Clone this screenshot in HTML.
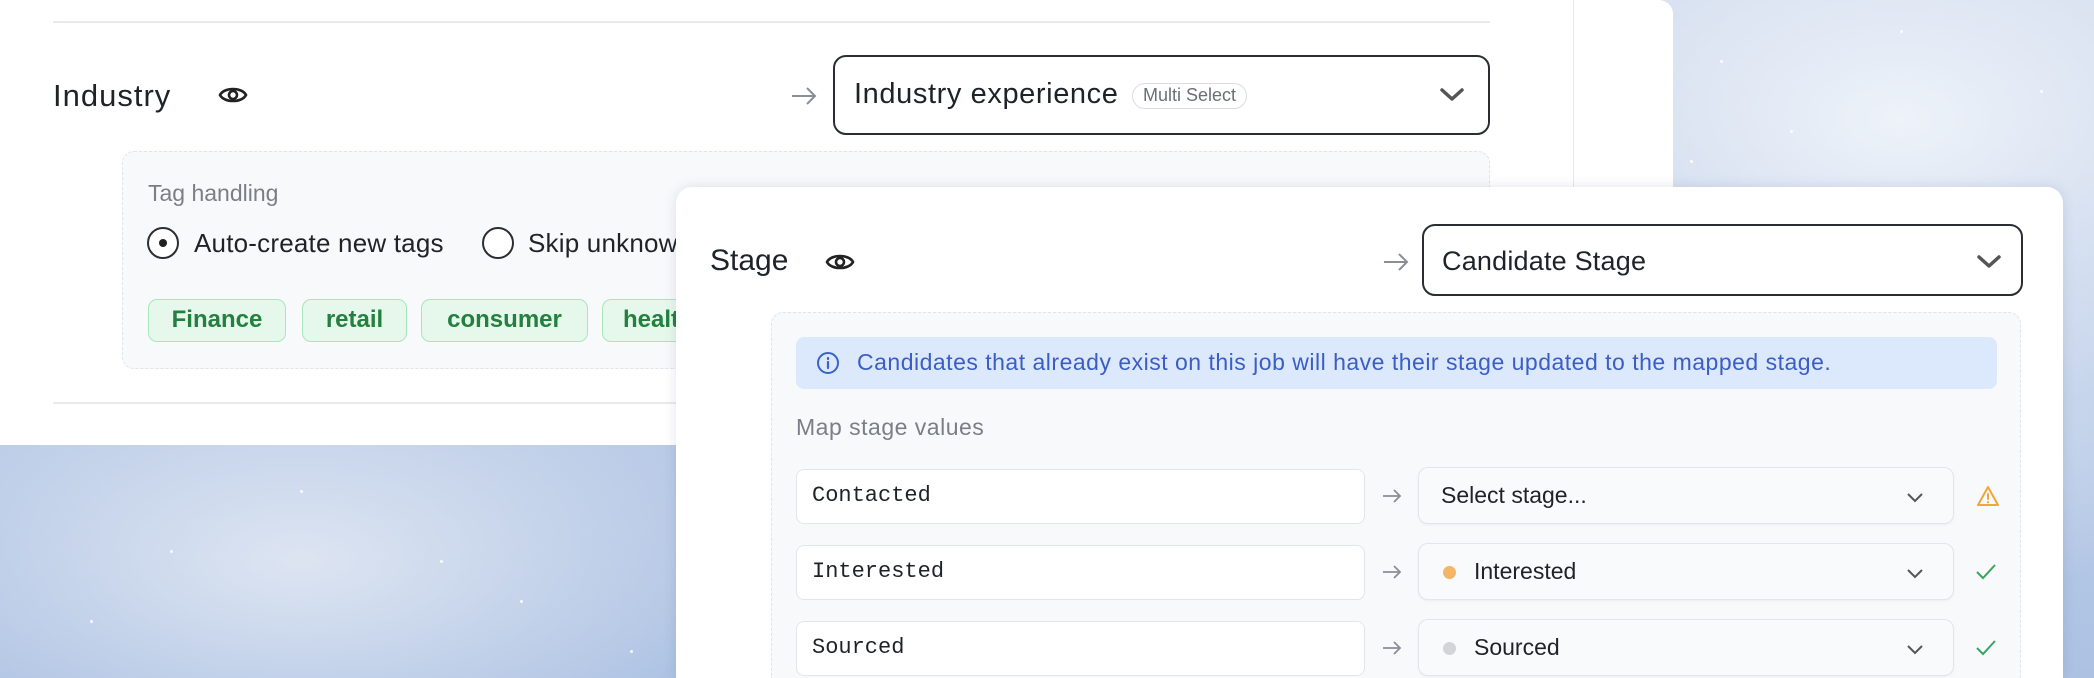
<!DOCTYPE html>
<html><head><meta charset="utf-8"><style>
*{box-sizing:border-box;margin:0;padding:0}
html,body{width:2094px;height:678px;overflow:hidden}
body{font-family:"Liberation Sans",sans-serif;color:#1f2329}
#w{position:relative;width:2094px;height:678px;overflow:hidden;background:#b6c7e3}
.sky{position:absolute;inset:0;background:
radial-gradient(ellipse 500px 300px at 1900px 120px,rgba(240,244,250,.95),transparent),
radial-gradient(ellipse 450px 220px at 300px 560px,rgba(228,234,244,.85),transparent),
radial-gradient(ellipse 600px 200px at 1800px 400px,rgba(215,226,242,.8),transparent),
linear-gradient(180deg,#cbd7ec,#adc2e3)}
.star{position:absolute;width:3px;height:3px;border-radius:50%;background:#fff;opacity:.85}
.card1{position:absolute;left:0;top:0;width:1673px;height:445px;background:#fff;border-top-right-radius:14px}
.vline{position:absolute;left:1573px;top:0;width:1px;height:445px;background:#e6e8eb}
.hline{position:absolute;height:2px;background:#e8eaed}
.label{position:absolute;font-size:31px;color:#1f2329}
.eye{position:absolute}
.arr{position:absolute}
.dd{position:absolute;border:2px solid #2a2d31;border-radius:13px;background:#fff}
.panel{position:absolute;background:#f8f9fb;border:1.5px dashed #e0e3e8;border-radius:12px}
.gray{position:absolute;color:#7a7f87;font-size:23px}
.radio{position:absolute;width:32px;height:32px;border:2px solid #2a2d31;border-radius:50%;background:#fff}
.tag{position:absolute;top:299px;height:43px;border:1.5px solid #a7e6bd;background:#e6f8ec;border-radius:9px;color:#23803e;font-weight:bold;font-size:24px;line-height:40px;text-align:center}
.card2{position:absolute;left:676px;top:187px;width:1387px;height:491px;background:#fff;border-radius:16px 16px 0 0;box-shadow:0 0 12px rgba(60,80,120,.15)}
.inp{position:absolute;height:55px;background:#fff;border:1.5px solid #e2e5ea;border-radius:8px;font-family:"Liberation Mono",monospace;font-size:22px;line-height:52px;padding-left:15px}
.sel{position:absolute;height:57px;background:#f9fafc;border:1.5px solid #e2e5ea;border-radius:10px;font-size:23px;line-height:54px;padding-left:22px;box-shadow:0 1px 2px rgba(0,0,0,.05)}
.chev{position:absolute}
</style></head><body><div id="w">
<div class="sky"></div>
<div class="star" style="left:1720px;top:60px"></div><div class="star" style="left:1790px;top:130px"></div><div class="star" style="left:1900px;top:30px"></div><div class="star" style="left:2040px;top:90px"></div><div class="star" style="left:1690px;top:160px"></div>
<div class="star" style="left:170px;top:550px"></div><div class="star" style="left:440px;top:560px"></div><div class="star" style="left:90px;top:620px"></div><div class="star" style="left:630px;top:650px"></div><div class="star" style="left:300px;top:490px"></div><div class="star" style="left:520px;top:600px"></div>
<div class="card1"></div>
<div class="vline"></div>
<div class="hline" style="left:53px;top:21px;width:1437px"></div>
<div class="label" style="left:53px;top:78px;letter-spacing:1px">Industry</div>
<svg class="eye" style="left:218px;top:83px" width="30" height="24" viewBox="0 0 30 24"><path d="M2 12C6 4 24 4 28 12C24 20 6 20 2 12Z" fill="none" stroke="#222" stroke-width="2.6"/><circle cx="15" cy="12" r="4" fill="none" stroke="#222" stroke-width="2.6"/></svg>
<svg class="arr" style="left:790px;top:86px" width="28" height="20" viewBox="0 0 28 20"><path d="M2 10H25M17 2L25 10L17 18" fill="none" stroke="#8a8f96" stroke-width="2"/></svg>
<div class="dd" style="left:833px;top:55px;width:657px;height:80px">
<span style="position:absolute;left:19px;top:21px;font-size:29px;letter-spacing:.6px">Industry experience</span>
<span style="position:absolute;left:297px;top:26px;height:26px;padding:0 10px;border:1.5px solid #d9dce1;border-radius:13px;font-size:18px;line-height:23px;color:#6a6f77">Multi Select</span>
<svg class="chev" style="left:604px;top:30px" width="26" height="16" viewBox="0 0 26 16"><path d="M3 3L13 12L23 3" fill="none" stroke="#555" stroke-width="3.5" stroke-linecap="round" stroke-linejoin="round"/></svg>
</div>
<div class="panel" style="left:122px;top:151px;width:1368px;height:218px"></div>
<div class="gray" style="left:148px;top:180px">Tag handling</div>
<div class="radio" style="left:147px;top:227px"><div style="position:absolute;left:10px;top:10px;width:8px;height:8px;border-radius:50%;background:#222"></div></div>
<div style="position:absolute;left:194px;top:228px;font-size:26px;letter-spacing:.2px">Auto-create new tags</div>
<div class="radio" style="left:482px;top:227px"></div>
<div style="position:absolute;left:528px;top:228px;font-size:26px;letter-spacing:.2px">Skip unknown</div>
<div class="tag" style="left:148px;width:138px">Finance</div>
<div class="tag" style="left:302px;width:105px">retail</div>
<div class="tag" style="left:421px;width:167px">consumer</div>
<div class="tag" style="left:602px;width:160px;text-align:left;padding-left:20px">health</div>
<div class="hline" style="left:53px;top:402px;width:640px"></div>

<div class="card2"></div>
<div class="label" style="left:710px;top:244px;font-size:30px">Stage</div>
<svg class="eye" style="left:825px;top:250px" width="30" height="24" viewBox="0 0 30 24"><path d="M2 12C6 4 24 4 28 12C24 20 6 20 2 12Z" fill="none" stroke="#222" stroke-width="2.6"/><circle cx="15" cy="12" r="4" fill="none" stroke="#222" stroke-width="2.6"/></svg>
<svg class="arr" style="left:1382px;top:252px" width="28" height="20" viewBox="0 0 28 20"><path d="M2 10H25M17 2L25 10L17 18" fill="none" stroke="#8a8f96" stroke-width="2"/></svg>
<div class="dd" style="left:1422px;top:224px;width:601px;height:72px">
<span style="position:absolute;left:18px;top:20px;font-size:27px;letter-spacing:.2px">Candidate Stage</span>
<svg class="chev" style="left:552px;top:28px" width="26" height="16" viewBox="0 0 26 16"><path d="M3 3L13 12L23 3" fill="none" stroke="#555" stroke-width="3.5" stroke-linecap="round" stroke-linejoin="round"/></svg>
</div>
<div class="panel" style="left:771px;top:312px;width:1250px;height:366px;border-bottom:none;border-radius:12px 12px 0 0"></div>
<div style="position:absolute;left:796px;top:337px;width:1201px;height:52px;background:#dce8fc;border-radius:8px"></div>
<svg style="position:absolute;left:816px;top:351px" width="24" height="24" viewBox="0 0 24 24"><circle cx="12" cy="12" r="10" fill="none" stroke="#3a63c8" stroke-width="2"/><path d="M12 11V17M12 7V8" stroke="#3a63c8" stroke-width="2.2" stroke-linecap="round"/></svg>
<div style="position:absolute;left:857px;top:349px;font-size:23px;letter-spacing:.5px;color:#3a5ec4;white-space:nowrap">Candidates that already exist on this job will have their stage updated to the mapped stage.</div>
<div class="gray" style="left:796px;top:414px;font-size:23px;letter-spacing:.5px">Map stage values</div>

<div class="inp" style="left:796px;top:469px;width:569px">Contacted</div>
<svg class="arr" style="left:1382px;top:488px" width="20" height="16" viewBox="0 0 20 16"><path d="M1 8H18M12 2L18 8L12 14" fill="none" stroke="#8a8f96" stroke-width="1.8"/></svg>
<div class="sel" style="left:1418px;top:467px;width:536px">Select stage...</div>
<svg style="position:absolute;left:1976px;top:484px" width="24" height="24" viewBox="0 0 24 24"><path d="M12 3L22 21H2Z" fill="none" stroke="#f0a63a" stroke-width="2" stroke-linejoin="round"/><path d="M12 10V15M12 18V18.5" stroke="#f0a63a" stroke-width="2" stroke-linecap="round"/></svg>

<div class="inp" style="left:796px;top:545px;width:569px">Interested</div>
<svg class="arr" style="left:1382px;top:564px" width="20" height="16" viewBox="0 0 20 16"><path d="M1 8H18M12 2L18 8L12 14" fill="none" stroke="#8a8f96" stroke-width="1.8"/></svg>
<div class="sel" style="left:1418px;top:543px;width:536px;padding-left:55px">Interested<span style="position:absolute;left:24px;top:22px;width:13px;height:13px;border-radius:50%;background:#f4b566"></span></div>
<svg style="position:absolute;left:1975px;top:562px" width="22" height="20" viewBox="0 0 22 20"><path d="M2 10L8 16L20 3" fill="none" stroke="#3aa561" stroke-width="2"/></svg>

<div class="inp" style="left:796px;top:621px;width:569px;height:55px">Sourced</div>
<svg class="arr" style="left:1382px;top:640px" width="20" height="16" viewBox="0 0 20 16"><path d="M1 8H18M12 2L18 8L12 14" fill="none" stroke="#8a8f96" stroke-width="1.8"/></svg>
<div class="sel" style="left:1418px;top:619px;width:536px;height:57px;padding-left:55px">Sourced<span style="position:absolute;left:24px;top:22px;width:13px;height:13px;border-radius:50%;background:#d2d4d8"></span></div>
<svg style="position:absolute;left:1975px;top:638px" width="22" height="20" viewBox="0 0 22 20"><path d="M2 10L8 16L20 3" fill="none" stroke="#3aa561" stroke-width="2"/></svg>

<svg class="chev" style="left:1906px;top:492px" width="18" height="12" viewBox="0 0 18 12"><path d="M2 2L9 9L16 2" fill="none" stroke="#555" stroke-width="2"/></svg>
<svg class="chev" style="left:1906px;top:568px" width="18" height="12" viewBox="0 0 18 12"><path d="M2 2L9 9L16 2" fill="none" stroke="#555" stroke-width="2"/></svg>
<svg class="chev" style="left:1906px;top:644px" width="18" height="12" viewBox="0 0 18 12"><path d="M2 2L9 9L16 2" fill="none" stroke="#555" stroke-width="2"/></svg>
</div></body></html>
